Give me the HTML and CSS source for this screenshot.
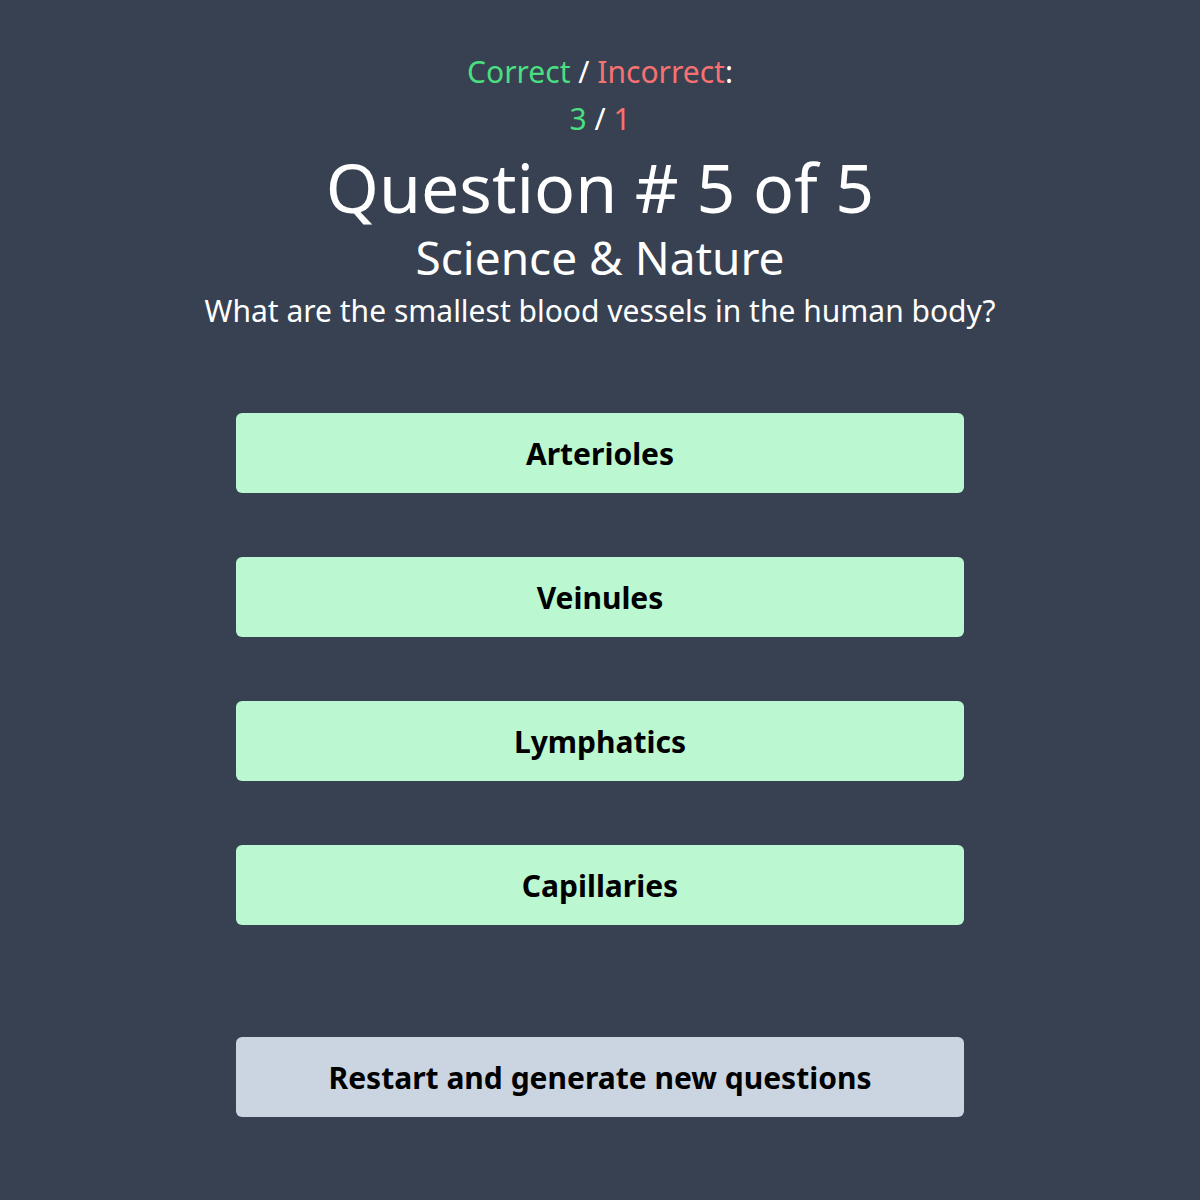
FILE: index.html
```html
<!DOCTYPE html>
<html lang="en">
<head>
<meta charset="utf-8">
<title>Quiz</title>
<link rel="stylesheet" href="styles.css">
</head>
<body>
<main class="quiz">
  <div class="score">
    <div class="score-line"><span class="good">Correct</span> / <span class="bad">Incorrect</span>:</div>
    <div class="score-line"><span class="good">3</span> / <span class="bad">1</span></div>
  </div>
  <h1 class="title">Question # 5 of 5</h1>
  <h2 class="category">Science &amp; Nature</h2>
  <p class="question">What are the smallest blood vessels in the human body?</p>
  <div class="answers">
    <button class="answer">Arterioles</button>
    <button class="answer">Veinules</button>
    <button class="answer">Lymphatics</button>
    <button class="answer">Capillaries</button>
  </div>
  <button class="restart">Restart and generate new questions</button>
</main>
</body>
</html>
```
FILE: styles.css
```css
html, body {
  margin: 0;
  padding: 0;
}
body {
  background: #374151;
  min-height: 100vh;
  font-family: "Noto Sans", "Open Sans", sans-serif;
  color: #ffffff;
}
.quiz {
  display: flex;
  flex-direction: column;
  align-items: center;
  text-align: center;
  padding-top: 48px;
}
.score-line {
  font-size: 30px;
  line-height: 47px;
}
.good { color: #4ade80; }
.bad { color: #f87171; }
.title {
  margin: 9px 0 0;
  font-size: 68px;
  line-height: 72px;
  font-weight: 400;
}
.category {
  margin: 6px 0 0;
  font-size: 46px;
  line-height: 56px;
  font-weight: 400;
}
.question {
  margin: 6px 0 0;
  font-size: 30px;
  line-height: 40px;
}
.answers {
  margin-top: 82px;
  display: flex;
  flex-direction: column;
  gap: 64px;
}
.answer, .restart {
  width: 728px;
  height: 80px;
  border: 0;
  border-radius: 6px;
  font-family: inherit;
  font-size: 30px;
  font-weight: 700;
  color: #000000;
  cursor: pointer;
}
.answer {
  background: #bbf7d0;
}
.restart {
  margin-top: 112px;
  background: #cbd5e1;
}
```
